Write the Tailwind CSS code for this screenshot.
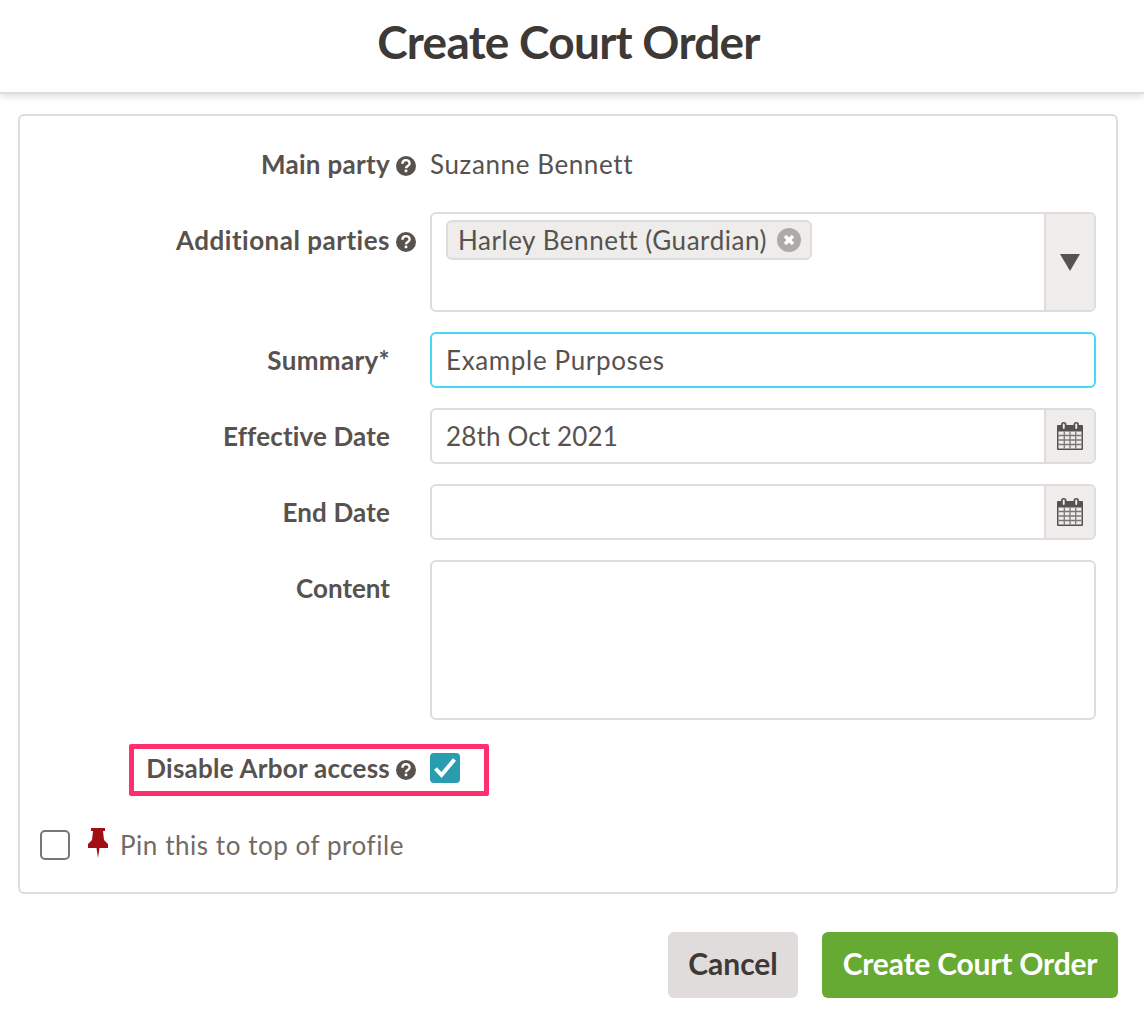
<!doctype html>
<html>
  <head>
    <meta charset="UTF-8" />
    <title>Create Court Order</title>
    <script src="https://cdn.jsdelivr.net/npm/@tailwindcss/browser@4"></script>
  </head>
  <body class="bg-white font-['Lato',sans-serif] text-[26px] text-[#58524e]">
    <div class="h-[94px] pb-[8px] pr-[7px] flex items-center justify-center border-b-2 border-[#e0dcdc] shadow-[0_3px_6px_rgba(0,0,0,0.12)]">
      <h1 class="text-[46px] font-bold text-[#3d3937] leading-none tracking-[-0.75px]">Create Court Order</h1>
    </div>

    <div class="relative ml-[18px] mr-[26px] mt-[20px] h-[780px] border-2 border-[#e0dcdc] rounded-md pt-5 pr-5">
      <div class="flex flex-col gap-5">
        <div class="flex gap-[14px] h-14 items-center">
          <div class="w-[396px] flex justify-end items-center gap-[6px] font-bold tracking-[0.3px]">
            Main party
            <svg class="w-5 h-5 mt-1" viewBox="0 0 20 20"><circle cx="10" cy="10" r="10" fill="#58524e"/><path d="M6.400 7.800c0-4.800 7.200-4.800 7.200-.4 0 2.500-3.600 2.500-3.600 4.800" fill="none" stroke="#fff" stroke-width="2.400"/><rect x="8.700" y="13.600" width="2.600" height="2.600" fill="#fff"/></svg>
          </div>
          <div class="flex-1 tracking-[0.6px]">Suzanne Bennett</div>
        </div>

        <div class="flex gap-[14px]">
          <div class="w-[396px] h-14 flex justify-end items-center gap-[6px] font-bold tracking-[0.5px]">
            Additional parties
            <svg class="w-5 h-5 mt-1" viewBox="0 0 20 20"><circle cx="10" cy="10" r="10" fill="#58524e"/><path d="M6.400 7.800c0-4.800 7.200-4.800 7.200-.4 0 2.500-3.600 2.500-3.600 4.800" fill="none" stroke="#fff" stroke-width="2.400"/><rect x="8.700" y="13.600" width="2.600" height="2.600" fill="#fff"/></svg>
          </div>
          <div class="flex-1 h-[100px] flex border-2 border-[#e0dcdc] rounded-md overflow-hidden">
            <div class="flex-1 pl-[14px] pt-[6px]">
              <div class="inline-flex items-center gap-[10px] h-10 pl-[10px] pr-[9px] bg-[#eeedec] border-2 border-[#e0dcdc] rounded-md tracking-[0.55px]">
                Harley Bennett (Guardian)
                <svg class="w-6 h-6" viewBox="0 0 24 24"><circle cx="12" cy="12" r="12" fill="#aeaaa8"/><path d="M8 8l8 8M16 8l-8 8" stroke="#fff" stroke-width="3.500"/></svg>
              </div>
            </div>
            <div class="w-[50px] bg-[#eeedec] border-l-2 border-[#e0dcdc] flex items-center justify-center">
              <svg class="w-5 h-[17px]" viewBox="0 0 20 17"><path d="M0 0h20L10 17z" fill="#58524e"/></svg>
            </div>
          </div>
        </div>

        <div class="flex gap-[14px] h-14">
          <div class="w-[396px] pr-[26px] flex justify-end items-center font-bold tracking-[0.35px]">Summary*</div>
          <div class="flex-1 border-2 border-[#45d9f5] rounded-md flex items-center pl-[14px] tracking-[0.65px]">Example Purposes</div>
        </div>

        <div class="flex gap-[14px] h-14">
          <div class="w-[396px] pr-[26px] flex justify-end items-center font-bold tracking-[0.15px]">Effective Date</div>
          <div class="flex-1 flex border-2 border-[#e0dcdc] rounded-md overflow-hidden">
            <div class="flex-1 flex items-center pl-[14px] tracking-[0.15px]">28th Oct 2021</div>
            <div class="w-[50px] bg-[#eeedec] border-l-2 border-[#e0dcdc] flex items-center justify-center">
              <svg class="w-[26px] h-[28px]" viewBox="0 0 26 28"><path d="M1 3h24a1 1 0 0 1 1 1v23a1 1 0 0 1-1 1H1a1 1 0 0 1-1-1V4a1 1 0 0 1 1-1z" fill="#58524e"/><rect x="4" y="0" width="5.500" height="8" rx="2.700" fill="#58524e"/><rect x="16.500" y="0" width="5.500" height="8" rx="2.700" fill="#58524e"/><rect x="5.800" y="1.500" width="1.900" height="5.500" rx="0.900" fill="#eeedec"/><rect x="18.300" y="1.500" width="1.900" height="5.500" rx="0.900" fill="#eeedec"/><path d="M1.500 9.500h23v17h-23z" fill="#eeedec"/><path d="M1.500 13.500h23M1.500 18h23M1.500 22.500h23M7.300 9.500v17M13 9.500v17M18.700 9.500v17" stroke="#7d7773" stroke-width="1.300"/></svg>
            </div>
          </div>
        </div>

        <div class="flex gap-[14px] h-14">
          <div class="w-[396px] pr-[26px] flex justify-end items-center font-bold tracking-[0.15px]">End Date</div>
          <div class="flex-1 flex border-2 border-[#e0dcdc] rounded-md overflow-hidden">
            <div class="flex-1"></div>
            <div class="w-[50px] bg-[#eeedec] border-l-2 border-[#e0dcdc] flex items-center justify-center">
              <svg class="w-[26px] h-[28px]" viewBox="0 0 26 28"><path d="M1 3h24a1 1 0 0 1 1 1v23a1 1 0 0 1-1 1H1a1 1 0 0 1-1-1V4a1 1 0 0 1 1-1z" fill="#58524e"/><rect x="4" y="0" width="5.500" height="8" rx="2.700" fill="#58524e"/><rect x="16.500" y="0" width="5.500" height="8" rx="2.700" fill="#58524e"/><rect x="5.800" y="1.500" width="1.900" height="5.500" rx="0.900" fill="#eeedec"/><rect x="18.300" y="1.500" width="1.900" height="5.500" rx="0.900" fill="#eeedec"/><path d="M1.500 9.500h23v17h-23z" fill="#eeedec"/><path d="M1.500 13.500h23M1.500 18h23M1.500 22.500h23M7.300 9.500v17M13 9.500v17M18.700 9.500v17" stroke="#7d7773" stroke-width="1.300"/></svg>
            </div>
          </div>
        </div>

        <div class="flex gap-[14px]">
          <div class="w-[396px] pr-[26px] h-14 flex justify-end items-center font-bold">Content</div>
          <div class="flex-1 h-40 border-2 border-[#e0dcdc] rounded-md"></div>
        </div>

        <div class="flex gap-[14px] h-14 items-center">
          <div class="w-[396px] flex justify-end items-center gap-[6px] font-bold tracking-[0.25px]">
            Disable Arbor access
            <svg class="w-5 h-5 mt-1" viewBox="0 0 20 20"><circle cx="10" cy="10" r="10" fill="#58524e"/><path d="M6.400 7.800c0-4.800 7.200-4.800 7.200-.4 0 2.500-3.600 2.500-3.600 4.800" fill="none" stroke="#fff" stroke-width="2.400"/><rect x="8.700" y="13.600" width="2.600" height="2.600" fill="#fff"/></svg>
          </div>
          <div class="w-[30px] h-[30px] rounded-[4px] bg-[#2a9cb0] flex items-center justify-center">
            <svg class="w-6 h-6" viewBox="0 0 24 24"><path d="M2.500 12.500l6 6.500 13-15.500" fill="none" stroke="#fff" stroke-width="4"/></svg>
          </div>
        </div>
      </div>

      <div class="flex items-center mt-[29px] pl-[20px] h-10 text-[#716a66] tracking-[0.55px]">
        <div class="w-[30px] h-[30px] rounded-[5px] border-2 border-[#7b7673]"></div>
        <svg class="w-5 h-[30px] ml-[18px] mr-[12px] -mt-1" viewBox="0 0 20 30"><path d="M3 0h14v3h-2l1 9 4 4v4h-8.500l-1.500 10-1.500-10H0v-4l4-4 1-9H3z" fill="#a10f14"/></svg>
        Pin this to top of profile
      </div>

      <div class="absolute left-[109px] top-[628px] w-[360px] h-[52px] border-[5px] border-[#ff2e6e] rounded-[2px]"></div>
    </div>

    <div class="flex justify-end gap-6 mt-[38px] mr-[26px] font-bold text-[30px]">
      <button class="w-[130px] h-[66px] pb-1 rounded-md bg-[#e0dcdc] text-[#3d3937]">Cancel</button>
      <button class="w-[296px] h-[66px] pb-1 rounded-md bg-[#67aa33] text-white tracking-[-0.2px]">Create Court Order</button>
    </div>
  </body>
</html>
